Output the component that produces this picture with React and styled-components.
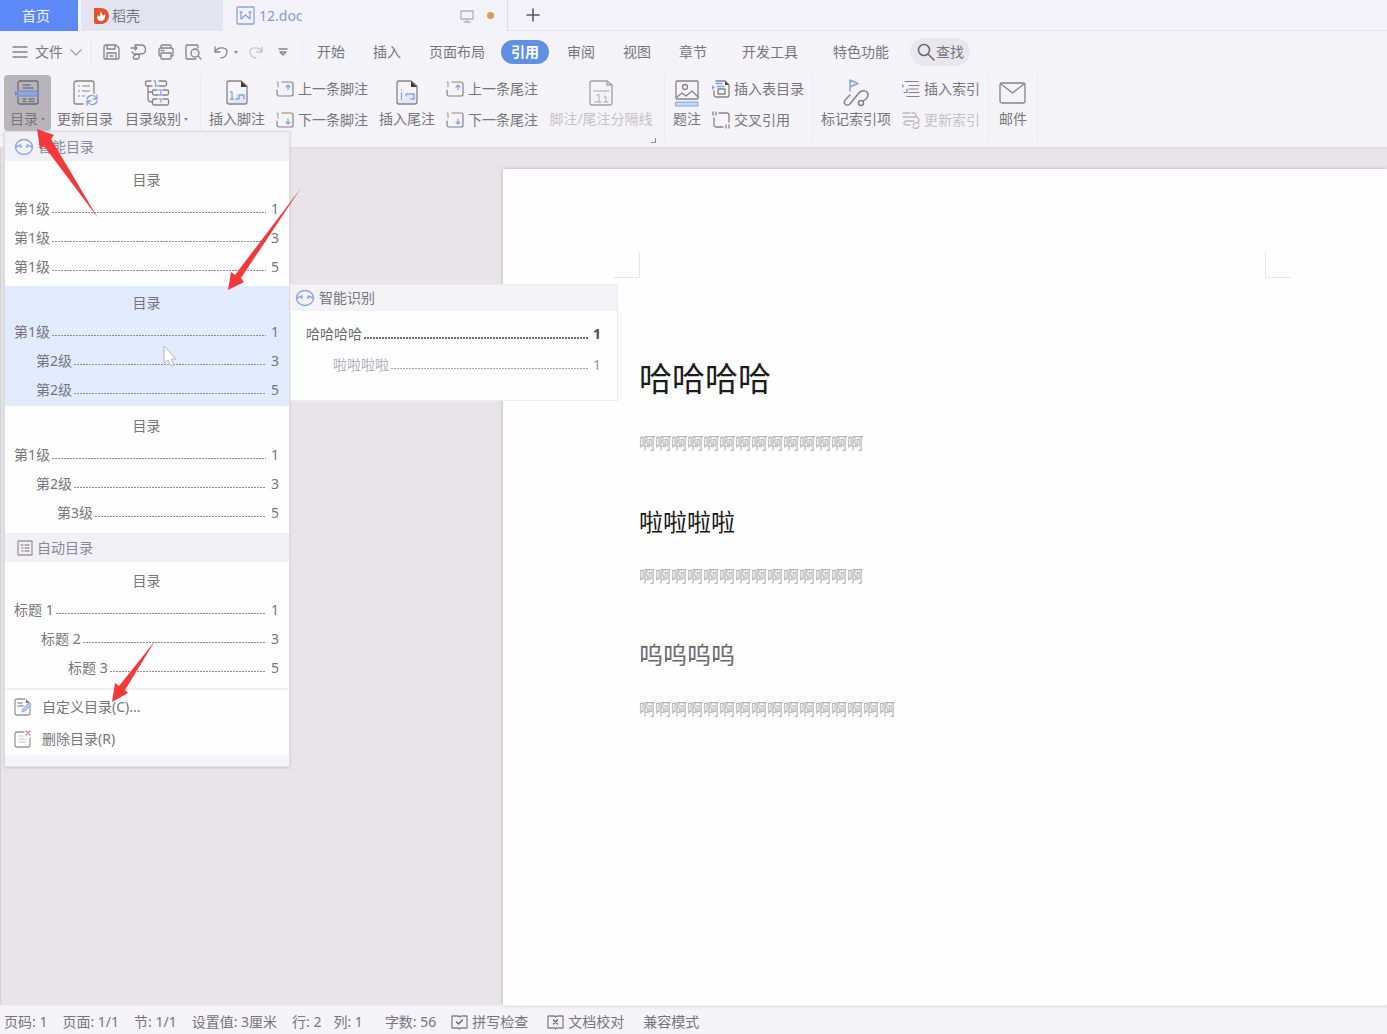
import React from 'react';
import styled, { createGlobalStyle } from 'styled-components';

const GlobalStyle = createGlobalStyle`
  * {
    box-sizing: border-box;
  }
  body {
    margin: 0;
    font-family: "Noto Sans", "Noto Sans CJK SC", sans-serif;
    font-size: 14px;
    line-height: 20px;
    color: #77757b;
  }
  button {
    font: inherit;
    color: inherit;
    background: none;
    border: 0;
    padding: 0;
    margin: 0;
    white-space: nowrap;
  }
  svg {
    display: block;
    flex: none;
  }
`;
const Shell = styled.div`
  position: relative;
  display: flex;
  flex-direction: column;
  min-height: 100vh;
  overflow: hidden;
  background: #f4f3f7;
`;
const TabStrip = styled.div`
  display: flex;
  height: 31px;
  background: #f3f2f8;
`;
const HomeTab = styled.button`
  width: 78px;
  background: #5d89f8;
  color: #eef3ff;
  padding-right: 6px;
`;
const DockTab = styled.button`
  display: flex;
  align-items: center;
  gap: 3px;
  width: 142px;
  margin-left: 3px;
  padding-left: 12px;
  background: #e4e4ee;
`;
const DocTab = styled.button`
  display: flex;
  align-items: center;
  width: 285px;
  padding: 0 13px;
  border-right: 1px solid #dddce3;
  color: #7f9ddb;
  span {
    flex: 1;
    text-align: left;
    margin-left: 4px;
  }
`;
const Dot = styled.i`
  width: 7px;
  height: 7px;
  margin-left: 13px;
  border-radius: 50%;
  background: #d99a58;
`;
const NewTab = styled.button`
  flex: 1;
  display: flex;
  align-items: center;
  padding-left: 18px;
  border-bottom: 1px solid #e3e2ea;
`;
const MenuBar = styled.nav`
  display: flex;
  align-items: center;
  height: 42px;
`;
const FileButton = styled.button`
  display: flex;
  align-items: center;
  gap: 7px;
  height: 28px;
  padding: 0 9px 0 12px;
  border-right: 1px solid #e8e7ec;
`;
const QuickBar = styled.div`
  display: flex;
  align-items: center;
  height: 28px;
  padding: 0 8px 0 9px;
  border-right: 1px solid #ebeaef;
`;
const QuickButton = styled.button`
  display: flex;
  justify-content: center;
  width: ${props => props.$width || 27}px;
`;
const MenuTab = styled.button`
  padding: 0 14px;
  margin-left: ${props => props.$gap || 0}px;
`;
const ActiveTab = styled.button`
  height: 24px;
  padding: 0 10px;
  margin: 0 4px 0 2px;
  border-radius: 12px;
  background: #5f90e6;
  color: #fff;
  font-weight: 700;
`;
const SearchButton = styled.button`
  display: flex;
  align-items: center;
  gap: 1px;
  height: 28px;
  margin-left: 7px;
  padding: 0 6px 0 7px;
  border-radius: 14px;
  background: #e8e7ed;
`;
const Ribbon = styled.div`
  display: flex;
  height: 76px;
  border-bottom: 2px solid #dedde1;
`;
const Group = styled.div`
  position: relative;
  display: flex;
  height: 70px;
  padding: 0 ${props => props.$right || 0}px 0 ${props => props.$left || 0}px;
  border-right: 1px solid #ecebf0;
`;
const BigButton = styled.button`
  display: flex;
  flex-direction: column;
  align-items: center;
  gap: 2px;
  width: ${props => props.$width}px;
  height: 56px;
  margin-top: 2px;
  padding-top: 4px;
  border-radius: 4px;
  background: ${props => (props.$pressed ? '#b7b5ba' : 'none')};
  color: ${props => (props.disabled ? '#c5c3c8' : 'inherit')};
`;
const Label = styled.span`
  display: flex;
  align-items: center;
  gap: 3px;
`;
const Caret = styled.i`
  border: 2px solid transparent;
  border-top: 3px solid #88868c;
  border-bottom: 0;
`;
const Stack = styled.div`
  display: flex;
  flex-direction: column;
  gap: 11px;
  padding: 6px ${props => props.$right || 4}px 0 ${props => props.$left || 4}px;
`;
const SmallButton = styled.button`
  display: flex;
  align-items: center;
  gap: 4px;
  height: 20px;
  color: ${props => (props.disabled ? '#c5c3c8' : 'inherit')};
`;
const Launcher = styled.i`
  position: absolute;
  right: 8px;
  bottom: 0;
  width: 5px;
  height: 5px;
  border-right: 1px solid #8f8d93;
  border-bottom: 1px solid #8f8d93;
`;
const Workspace = styled.main`
  flex: 1;
  display: flex;
  padding: 20px 0 0 503px;
  background: #e7e5e8;
  border-left: 1px solid #d3d1d5;
`;
const Paper = styled.article`
  flex: 1;
  margin-left: -1px;
  padding-top: 83px;
  background: #fefefe;
  box-shadow: 0 0 4px #b5b3b7;
`;
const MarginMarks = styled.div`
  display: flex;
  justify-content: space-between;
  padding: 0 96px 0 111px;
`;
const Mark = styled.i`
  width: 26px;
  height: 26px;
  border: 0 solid #e6e5e8;
  border-bottom-width: 1px;
  border-${props => props.$side}-width: 1px;
`;
const Body = styled.div`
  padding: 75px 96px 60px 136px;
  font-family: "Noto Sans CJK SC", sans-serif;
`;
const Heading1 = styled.h1`
  margin: 0 0 29px;
  font-size: 33px;
  line-height: 48px;
  font-weight: 400;
  color: #1c1c1c;
`;
const Heading2 = styled.h2`
  margin: 51px 0 0;
  font-size: 24px;
  line-height: 32px;
  font-weight: 400;
  color: ${props => (props.$light ? '#6a6a6a' : '#161616')};
`;
const Paragraph = styled.p`
  margin: 26px 0 0;
  font-size: 16px;
  line-height: 24px;
  font-weight: 400;
  color: #aeaeae;
`;
const StatusBar = styled.footer`
  display: flex;
  align-items: center;
  height: 29px;
  padding: 4px 0 0 4px;
  border-top: 1px solid #eeedf1;
`;
const Status = styled.span`
  display: flex;
  align-items: center;
  gap: 4px;
  margin-right: ${props => props.$gap || 15}px;
  white-space: nowrap;
`;
const StatusButton = styled.button`
  display: flex;
  align-items: center;
  gap: 4px;
  margin-right: 19px;
`;
const Menu = styled.div`
  position: absolute;
  top: 131px;
  left: 4px;
  width: 286px;
  border: 1px solid #dcdbe0;
  background: #fefefe;
  box-shadow: 0 1px 3px #cfcdd2;
`;
const MenuHeader = styled.div`
  display: flex;
  align-items: center;
  gap: ${props => props.$gap || 4}px;
  height: 29px;
  padding-left: ${props => props.$left || 9}px;
  background: #f1f0f5;
  color: #86899b;
`;
const Preset = styled.button`
  display: block;
  width: 100%;
  padding: ${props => props.$top}px 10px ${props => props.$bottom}px 9px;
  background: ${props => (props.$active ? '#e2eafd' : 'none')};
`;
const PresetTitle = styled.span`
  display: block;
  line-height: 28px;
`;
const Entry = styled.span`
  display: flex;
  align-items: center;
  height: 29px;
  padding-left: ${props => props.$indent}px;
`;
const Leader = styled.i`
  flex: 1;
  height: ${props => props.$height || 1}px;
  margin: 8px 5px 0 2px;
  background: repeating-linear-gradient(90deg, ${props => props.$color || '#8d8b91'} 0 2px, transparent 2px 3px);
`;
const Actions = styled.div`
  border-top: 2px solid #efeef1;
  border-bottom: 11px solid #f5f4f8;
  padding-top: 1px;
`;
const Action = styled.button`
  display: flex;
  align-items: center;
  gap: 10px;
  width: 100%;
  height: 32px;
  padding-left: 9px;
`;
const SubMenu = styled.div`
  position: absolute;
  top: 152px;
  left: 285px;
  width: 328px;
  height: 117px;
  border: 1px solid #ececee;
  background: #fefefe;
`;
const SubHeader = styled.div`
  display: flex;
  align-items: center;
  gap: 4px;
  height: 26px;
  margin-bottom: 7px;
  padding-left: 4px;
  background: #f3f3f5;
`;
const SubEntry = styled.div`
  display: flex;
  align-items: center;
  height: 31px;
  padding: 0 16px 0 ${props => props.$indent}px;
  color: ${props => (props.$strong ? '#6c6a70' : '#b2b0b5')};
  b {
    font-weight: ${props => (props.$strong ? 700 : 400)};
    color: ${props => (props.$strong ? '#4c4a50' : '#98969b')};
  }
`;
const Pointers = styled.svg`
  position: absolute;
  top: 0;
  left: 0;
  pointer-events: none;
`;

const GREY = '#858389';
const BLUE = '#86a2e4';

const Icon = ({ w = 18, h = w, color = GREY, sw = 1.3, children }) => (
  <svg width={w} height={h} viewBox={`0 0 ${w} ${h}`} fill="none" stroke={color} strokeWidth={sw} strokeLinecap="round" strokeLinejoin="round" aria-hidden="true">
    {children}
  </svg>
);

const TocIcon = () => (
  <Icon w={28}>
    <rect x="4" y="2" width="20" height="23" rx="2" stroke="#6d6b72" />
    <path d="M9 6h7M9 9h10M9 20h3m3 0h5M9 22.500h3m3 0h5" stroke="#77757b" />
    <rect x="4" y="12" width="19" height="5" fill="#8fa7da" stroke="#7f97cf" />
    <path d="M1 12l3 2.500-3 2.500z" fill="#6f89c4" stroke="none" />
  </Icon>
);
const RefreshTocIcon = () => (
  <Icon w={28}>
    <path d="M12 25H5a2 2 0 0 1-2-2V4a2 2 0 0 1 2-2h16a2 2 0 0 1 2 2v10" />
    <path d="M7.500 7h1m3 0h7M7.500 12h1m3 0h7M7.500 17h1m3 0h2" stroke="#b0a9a6" />
    <path d="M16 20c1-4 7-5 9-1m1-3v4h-4M26 22c-1 4-7 5-9 1m-1 3v-4h4" stroke={BLUE} />
  </Icon>
);
const LevelsIcon = () => (
  <Icon w={28}>
    <path d="M8 2H4a1.500 1.500 0 0 0-1.500 1.500v2A1.500 1.500 0 0 0 4 7h5M16 2h6a1.500 1.500 0 0 1 1.500 1.500v2A1.500 1.500 0 0 1 22 7h-6" />
    <path d="M14 11h-3a1.500 1.500 0 0 0-1.500 1.500v2A1.500 1.500 0 0 0 11 16h4M20 11h4a1.500 1.500 0 0 1 1.500 1.500v2A1.500 1.500 0 0 1 24 16h-4" />
    <path d="M14 20h-3a1.500 1.500 0 0 0-1.500 1.500v3A1.500 1.500 0 0 0 11 26h13a1.500 1.500 0 0 0 1.500-1.500v-3A1.500 1.500 0 0 0 24 20h-4" />
    <path d="M5 7v13q0 3 4 3M5 13h4" />
    <path d="M11 2h1.500v5h2M16 11h2v5M16 16h3M16 20h2v3" stroke={BLUE} />
  </Icon>
);
const NoteIcon = ({ end }) => (
  <Icon w={28}>
    <path d="M5 20h8v-5h10v9H5z" fill="#e0e8fb" stroke="none" />
    <path d="M18 2H6a2 2 0 0 0-2 2v19a2 2 0 0 0 2 2h16a2 2 0 0 0 2-2V7z" />
    <path d="M18 2l6 6h-6z" fill="#3d3b40" stroke="none" />
    <path d={end ? 'M8.500 11v0M8.500 14v6M13 15h8v5h-3M13 15v2' : 'M7.500 13h1.500v7M7.500 20h3M13 20h3v-4h5v4'} stroke={BLUE} />
  </Icon>
);
const StepIcon = ({ down }) => (
  <Icon w={18} sw={1.200}>
    <path d="M6 2h9a2 2 0 0 1 2 2v10a2 2 0 0 1-2 2H3a2 2 0 0 1-2-2v-4" />
    <path d="M1 2h1v5" stroke="#a9a39c" />
    <path d={down ? 'M12 8v5M10 11l2 2 2-2' : 'M12 10V5M10 7l2-2 2 2'} stroke={BLUE} />
  </Icon>
);
const DividerIcon = () => (
  <Icon w={28} color="#a3a1a6">
    <path d="M20 2H5a2 2 0 0 0-2 2v20a2 2 0 0 0 2 2h18a2 2 0 0 0 2-2V6z" />
    <path d="M20 2v4h5" />
    <path d="M7 12h15M10 16h2v7M8 23h6M18 15v0M17 18h2v5M17 23h4" stroke="#c0bec3" />
  </Icon>
);
const CaptionIcon = () => (
  <Icon w={28}>
    <rect x="3" y="2" width="22" height="18" rx="1" />
    <circle cx="12" cy="8" r="2.500" />
    <path d="M4 18l5-4 4 3 6-5 6 6" />
    <rect x="3" y="23" width="22" height="4" fill="#c8d7f7" stroke={BLUE} strokeWidth="1" />
  </Icon>
);
const TableTocIcon = () => (
  <Icon w={18}>
    <path d="M4 1h9l4 4v10a2 2 0 0 1-2 2H4a2 2 0 0 1-2-2v-4" />
    <path d="M13 1l4 4h-4z" fill="#4d4b50" stroke="none" />
    <path d="M4 3.500h6M5 6.500h7" stroke={BLUE} />
    <path d="M0 5l3 2.500L0 10z" fill={BLUE} stroke="none" />
    <rect x="6" y="9" width="7" height="5" />
  </Icon>
);
const CrossRefIcon = () => (
  <Icon w={18}>
    <path d="M7 2h8a2 2 0 0 1 2 2v7M11 16H4a2 2 0 0 1-2-2V7M1 1v3M4 1v3M14 14v3M17 14v3" />
  </Icon>
);
const MarkIndexIcon = () => (
  <Icon w={28} sw={1.500}>
    <path d="M8 16l-4 4c-4 4 0 8 4 5l8-10c3-4 7-4 9-2 2 3 1 5-1 7l-3 2" />
    <circle cx="19" cy="24" r="2.500" />
    <path d="M8 12V1l8 3.500L8 8" stroke={BLUE} />
  </Icon>
);
const IndexIcon = () => (
  <Icon w={18} sw={1.200}>
    <path d="M3 1.500h13M7 5.500h10M7 9h9M2 12.500h2.500M7 12.500h10M5 16.500h12M5 9v3" />
    <path d="M0 4l2.500 2L0 8z" fill={BLUE} stroke="none" />
  </Icon>
);
const UpdateIndexIcon = () => (
  <Icon w={18} color="#bab8bd">
    <path d="M1 2h7M1 6h11a2 2 0 0 0 0-4h-2M13 6c4 0 5 3 3 5M12 10H5c-4 0-4 4 0 4h3M11 14c1-3 5-3 6-1M17 15c-1 3-5 3-6 1" />
  </Icon>
);
const MailIcon = () => (
  <Icon w={28}>
    <rect x="1" y="4" width="25" height="20" rx="2" />
    <path d="M2 5l11.500 9L25 5" />
  </Icon>
);
const SmartIcon = () => (
  <Icon w={20} h={18} color="#8ba5ee" sw={1.400}>
    <ellipse cx="10" cy="9" rx="8.500" ry="7.500" />
    <path d="M2 9l5-2v2.500M18 9l-5-2v2.500" />
  </Icon>
);
const BookIcon = ({ cross }) => (
  <Icon w={17} h={16}>
    <path d="M1 2h5q2 0 2.500 1Q9 2 11 2h5v12h-5q-2 0-2.500 1-.5-1-2.500-1H1z" />
    <path d={cross ? 'M6.500 6l4 4M10.500 6l-4 4' : 'M5.500 8l2 2 4-4'} stroke="#5c5a80" />
  </Icon>
);

const presets = [
  { top: 5, bottom: 5, rows: [['第1级', 0, 1], ['第1级', 0, 3], ['第1级', 0, 5]] },
  { top: 3, bottom: 2, active: true, rows: [['第1级', 0, 1], ['第2级', 22, 3], ['第2级', 22, 5]] },
  { top: 6, bottom: 6, rows: [['第1级', 0, 1], ['第2级', 22, 3], ['第3级', 43, 5]] }
];
const autoPreset = { top: 5, bottom: 6, rows: [['标题 1', 0, 1], ['标题 2', 27, 3], ['标题 3', 54, 5]] };

const TocPreset = ({ top, bottom, active, rows }) => (
  <Preset $top={top} $bottom={bottom} $active={active}>
    <PresetTitle>目录</PresetTitle>
    {rows.map(([text, indent, page]) => (
      <Entry key={page} $indent={indent}>
        {text}
        <Leader />
        {page}
      </Entry>
    ))}
  </Preset>
);

const StepButtons = ({ kind }) => (
  <Stack>
    <SmallButton><StepIcon />上一条{kind}</SmallButton>
    <SmallButton><StepIcon down />下一条{kind}</SmallButton>
  </Stack>
);

const TopTabs = () => (
  <TabStrip>
    <HomeTab>首页</HomeTab>
    <DockTab>
      <Icon w={16} h={18}>
        <path d="M1 1h7a8 8 0 0 1 0 16H3a2 2 0 0 1-2-2z" fill="#e2532f" stroke="none" />
        <path d="M8 4c0 3 2 3 2 5l2-2c1 4-1 7-4 7s-5-3-3-6l1 2c2-2 1-4 2-6z" fill="#fff" stroke="none" />
      </Icon>
      稻壳
    </DockTab>
    <DocTab>
      <Icon w={19} color={BLUE}>
        <rect x="1" y="1" width="17" height="17" rx="1" />
        <path d="M5 6v7l4.500-4 4.500 4V6M4 6h2M13 6h2" />
      </Icon>
      <span>12.doc</span>
      <Icon w={14} color="#b4b2b8">
        <path d="M1 2h12v8H1zM7 10v3M4 13h6" />
      </Icon>
      <Dot />
    </DocTab>
    <NewTab aria-label="新建">
      <Icon w={14} color="#5c5a60" sw={1.600}>
        <path d="M7 1v12M1 7h12" />
      </Icon>
    </NewTab>
  </TabStrip>
);

const MainMenu = () => (
  <MenuBar>
    <FileButton>
      <Icon w={16} h={14}><path d="M1 2h14M1 7h14M1 12h14" /></Icon>
      文件
      <Icon w={12} h={8} color="#a3a1a7"><path d="M1 2l5 5 5-5" /></Icon>
    </FileButton>
    <QuickBar>
      <QuickButton aria-label="保存" $width={20}>
        <Icon><path d="M2 4a2 2 0 0 1 2-2h10l3 3v10a1 1 0 0 1-1 1H3a1 1 0 0 1-1-1zM5 2v4h8V2M5 16v-6h9v6M8 13h3" /></Icon>
      </QuickButton>
      <QuickButton aria-label="输出" $width={34}>
        <Icon><path d="M6 2h6c6 0 6 9 0 9H5M2 5h6M6 3l2 2-2 2M3 9l2 2M8 11c3 0 3 5 0 5H6c-3 0-2-4 2-5" /></Icon>
      </QuickButton>
      <QuickButton aria-label="打印" $width={22}>
        <Icon><path d="M4 5V3a1 1 0 0 1 1-1h8a1 1 0 0 1 1 1v2M4 13H3a1 1 0 0 1-1-1V7a2 2 0 0 1 2-2h10a2 2 0 0 1 2 2v5a1 1 0 0 1-1 1h-1M4 10h10v5a1 1 0 0 1-1 1H5a1 1 0 0 1-1-1zM4 7.500h3" /></Icon>
      </QuickButton>
      <QuickButton aria-label="打印预览" $width={32}>
        <Icon><path d="M7 16H3a1 1 0 0 1-1-1V3a1 1 0 0 1 1-1h10a1 1 0 0 1 1 1v2M14 13l3 3M7 16h5" /><circle cx="11" cy="10" r="4" /></Icon>
      </QuickButton>
      <QuickButton aria-label="撤销" $width={23}>
        <Icon w={16}><path d="M2 3v5h5M2 8c3-6 12-5 12 0 0 3-3 6-6 6" /></Icon>
      </QuickButton>
      <QuickButton aria-label="撤销列表" $width={8}><Caret /></QuickButton>
      <QuickButton aria-label="恢复" $width={32}>
        <Icon w={16} color="#c6c4c9"><path d="M14 3v5H9M14 8C11 2 2 3 2 8c0 3 3 6 6 6" /></Icon>
      </QuickButton>
      <QuickButton aria-label="更多" $width={22}>
        <Icon w={10}><path d="M1 2h8M2 5h6L5 8z" /></Icon>
      </QuickButton>
    </QuickBar>
    <MenuTab>开始</MenuTab>
    <MenuTab>插入</MenuTab>
    <MenuTab>页面布局</MenuTab>
    <ActiveTab>引用</ActiveTab>
    <MenuTab>审阅</MenuTab>
    <MenuTab>视图</MenuTab>
    <MenuTab>章节</MenuTab>
    <MenuTab $gap={7}>开发工具</MenuTab>
    <MenuTab $gap={7}>特色功能</MenuTab>
    <SearchButton>
      <Icon sw={1.600} color="#6c6a70"><circle cx="7" cy="7" r="5.500" /><path d="M11 11l6 6" /></Icon>
      查找
    </SearchButton>
  </MenuBar>
);

const ReferenceRibbon = () => (
  <Ribbon>
    <Group $left={4} $right={6}>
      <BigButton $width={47} $pressed aria-expanded="true"><TocIcon /><Label>目录<Caret /></Label></BigButton>
      <BigButton $width={68}><RefreshTocIcon />更新目录</BigButton>
      <BigButton $width={75}><LevelsIcon /><Label>目录级别<Caret /></Label></BigButton>
    </Group>
    <Group $left={1} $right={4}>
      <BigButton $width={70}><NoteIcon />插入脚注</BigButton>
      <StepButtons kind="脚注" />
      <BigButton $width={70}><NoteIcon end />插入尾注</BigButton>
      <StepButtons kind="尾注" />
      <BigButton $width={118} disabled><DividerIcon />脚注/尾注分隔线</BigButton>
      <Launcher />
    </Group>
    <Group>
      <BigButton $width={44}><CaptionIcon />题注</BigButton>
      <Stack $left={3} $right={8}>
        <SmallButton><TableTocIcon />插入表目录</SmallButton>
        <SmallButton><CrossRefIcon />交叉引用</SmallButton>
      </Stack>
    </Group>
    <Group>
      <BigButton $width={86}><MarkIndexIcon />标记索引项</BigButton>
      <Stack $left={3} $right={8}>
        <SmallButton><IndexIcon />插入索引</SmallButton>
        <SmallButton disabled><UpdateIndexIcon />更新索引</SmallButton>
      </Stack>
    </Group>
    <Group>
      <BigButton $width={48}><MailIcon />邮件</BigButton>
    </Group>
  </Ribbon>
);

const TocMenu = () => (
  <Menu>
    <MenuHeader><SmartIcon />智能目录</MenuHeader>
    {presets.map((preset, i) => <TocPreset key={i} {...preset} />)}
    <MenuHeader $left={12}>
      <Icon w={16} color="#9a989e">
        <rect x="1" y="1" width="14" height="14" />
        <path d="M4 5h2M8 5h4M5 8h1M8 8h4M5 11h1M8 11h4" />
      </Icon>
      自动目录
    </MenuHeader>
    <TocPreset {...autoPreset} />
    <Actions>
      <Action>
        <Icon color="#9a989e">
          <path d="M11 1H3a2 2 0 0 0-2 2v12a2 2 0 0 0 2 2h11a2 2 0 0 0 2-2V5M4 5h4M4 8h5" />
          <path d="M12 1l4 4h-4z" fill="#77757b" stroke="none" />
          <path d="M8 14l1-3 6-6 2 2-6 6z" fill="#bccdf7" stroke="#a3b9f0" />
        </Icon>
        自定义目录(C)...
      </Action>
      <Action>
        <Icon color="#9a989e">
          <path d="M10 2H3a2 2 0 0 0-2 2v11a2 2 0 0 0 2 2h11a2 2 0 0 0 2-2V8" />
          <path d="M5 6h4M5 9h6M5 12h6" stroke="#d8d6da" />
          <path d="M12 1l4 4M16 1l-4 4" stroke="#d97c8b" />
        </Icon>
        删除目录(R)
      </Action>
    </Actions>
    <SubMenu>
      <SubHeader><SmartIcon />智能识别</SubHeader>
      <SubEntry $indent={15} $strong>哈哈哈哈<Leader $height={2} $color="#6c6a70" /><b>1</b></SubEntry>
      <SubEntry $indent={42}>啦啦啦啦<Leader $color="#a5a3a8" /><b>1</b></SubEntry>
    </SubMenu>
  </Menu>
);

class App extends React.Component {
  render() {
    return <Shell>
        <GlobalStyle />
        <TopTabs />
        <MainMenu />
        <ReferenceRibbon />
        <Workspace>
          <Paper>
            <MarginMarks>
              <Mark $side="right" />
              <Mark $side="left" />
            </MarginMarks>
            <Body>
              <Heading1>哈哈哈哈</Heading1>
              <Paragraph>{'啊'.repeat(14)}</Paragraph>
              <Heading2>啦啦啦啦</Heading2>
              <Paragraph>{'啊'.repeat(14)}</Paragraph>
              <Heading2 $light>呜呜呜呜</Heading2>
              <Paragraph>{'啊'.repeat(16)}</Paragraph>
            </Body>
          </Paper>
        </Workspace>
        <StatusBar>
          <Status>页码: 1</Status>
          <Status>页面: 1/1</Status>
          <Status>节: 1/1</Status>
          <Status>设置值: 3厘米</Status>
          <Status $gap={12}>行: 2</Status>
          <Status $gap={22}>列: 1</Status>
          <Status>字数: 56</Status>
          <StatusButton><BookIcon />拼写检查</StatusButton>
          <StatusButton><BookIcon cross />文档校对</StatusButton>
          <Status>兼容模式</Status>
        </StatusBar>
        <TocMenu />
        <Pointers width="310" height="710" fill="#f5383a">
          <path d="M37 129l17 6-3 4 47 79-54-72-4 3z" />
          <path d="M228 290l3-18 4 3 66-87-60 90 3 4z" />
          <path d="M112 702l3-19 4 3 36-45-30 49 3 3z" />
          <path d="M164 346v17l4-3 3 6 3-1-3-6h5z" fill="#fff" stroke="#b5b5bd" />
        </Pointers>
      </Shell>;
  }
}

export default App;
